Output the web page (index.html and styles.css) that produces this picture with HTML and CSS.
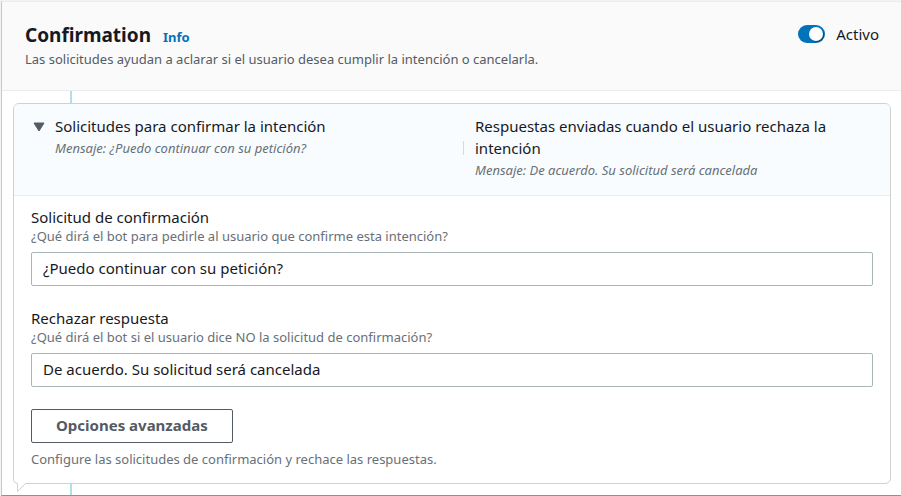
FILE: index.html
```html
<!DOCTYPE html>
<html lang="es">
<head>
<meta charset="utf-8">
<title>Confirmation</title>
<link rel="stylesheet" href="styles.css">
</head>
<body>
<main class="panel">
  <header class="panel-header">
    <div>
      <div class="title-row">
        <h1>Confirmation</h1>
        <a class="info" href="#info">Info</a>
      </div>
      <p class="description">Las solicitudes ayudan a aclarar si el usuario desea cumplir la intención o cancelarla.</p>
    </div>
    <label class="toggle">
      <input type="checkbox" role="switch" checked>
      <span>Activo</span>
    </label>
  </header>
  <div class="flow">
    <div class="connector"></div>
    <section class="card">
      <button class="summary" type="button" aria-expanded="true" aria-controls="prompts">
        <svg class="caret" viewBox="0 0 12 10" aria-hidden="true"><path d="M1 1h10L6 9z"/></svg>
        <span class="summary-item">
          <span class="summary-title">Solicitudes para confirmar la intención</span>
          <span class="summary-message">Mensaje: ¿Puedo continuar con su petición?</span>
        </span>
        <span class="divider"></span>
        <span class="summary-item">
          <span class="summary-title">Respuestas enviadas cuando el usuario rechaza la intención</span>
          <span class="summary-message">Mensaje: De acuerdo. Su solicitud será cancelada</span>
        </span>
      </button>
      <form class="fields" id="prompts">
        <div class="field">
          <label for="confirm">Solicitud de confirmación</label>
          <p class="hint" id="confirm-hint">¿Qué dirá el bot para pedirle al usuario que confirme esta intención?</p>
          <input class="textbox" type="text" id="confirm" aria-describedby="confirm-hint" value="¿Puedo continuar con su petición?">
        </div>
        <div class="field">
          <label for="decline">Rechazar respuesta</label>
          <p class="hint" id="decline-hint">¿Qué dirá el bot si el usuario dice NO la solicitud de confirmación?</p>
          <input class="textbox" type="text" id="decline" aria-describedby="decline-hint" value="De acuerdo. Su solicitud será cancelada">
        </div>
        <div>
          <button class="advanced" type="button">Opciones avanzadas</button>
          <p class="hint">Configure las solicitudes de confirmación y rechace las respuestas.</p>
        </div>
      </form>
      <svg class="tail" viewBox="0 0 13 14" aria-hidden="true"><path class="tail-fill" d="M0 0v2l4 3v8l8-8V0z"/><path class="tail-line" d="M.5 0v1.500q0 2 4 3v8l8-8"/></svg>
    </section>
    <div class="connector connector-end"></div>
  </div>
</main>
</body>
</html>
```
FILE: styles.css
```css
* {
  box-sizing: border-box;
}

body {
  margin: 0;
  padding: 1px 0 0 1px;
  background: #f2f3f3;
  color: #16191f;
  font-family: "Noto Sans", "Open Sans", sans-serif;
  font-size: 15px;
  line-height: 22px;
}

h1,
p {
  margin: 0;
}

.panel {
  border-top: 1px solid #eaeded;
  border-left: 1px solid #c4c9ca;
  border-bottom: 1px solid #879596;
  background: #fff;
}

.panel-header {
  display: flex;
  justify-content: space-between;
  align-items: flex-start;
  padding: 21px 22px 20px 23px;
  border-bottom: 1px solid #eaeded;
  background: #fafafa;
}

.title-row {
  display: flex;
  align-items: baseline;
  gap: 12px;
}

h1 {
  font-size: 19px;
  line-height: 25px;
}

.info {
  color: #0073bb;
  font-size: 13px;
  font-weight: 700;
  text-decoration: none;
}

.description {
  color: #545b64;
  font-size: 13px;
}

.toggle {
  display: flex;
  align-items: center;
  gap: 11px;
}

.toggle input {
  appearance: none;
  display: flex;
  justify-content: flex-end;
  align-items: center;
  width: 27px;
  height: 18px;
  margin: 0;
  padding: 2px;
  border-radius: 9px;
  background: #0073bb;
}

.toggle input::before {
  content: "";
  width: 14px;
  height: 14px;
  border-radius: 50%;
  background: #fff;
  box-shadow: 1px 1px 1px rgba(0, 28, 36, 0.5);
}

.toggle input:not(:checked) {
  justify-content: flex-start;
  background: #879596;
}

.flow {
  padding: 0 10px 0 11px;
}

.connector {
  width: 2px;
  height: 12px;
  margin-left: 57px;
  background: #b0dfe5;
}

.connector-end {
  height: 11px;
}

.card {
  position: relative;
  border: 1px solid #d0d1d1;
  border-radius: 6px;
  background: #fff;
}

.summary {
  display: grid;
  grid-template-columns: 11px 1fr 1px 1fr;
  width: 100%;
  padding: 11px 7px 14px 19px;
  border: 0;
  border-bottom: 1px solid #eaeded;
  border-radius: 5px 5px 0 0;
  background: #f8fcff;
  color: inherit;
  font: inherit;
  text-align: left;
}

.caret {
  width: 12px;
  height: 10px;
  margin-top: 7px;
  fill: #545b64;
  stroke: #545b64;
  stroke-linejoin: round;
}

.summary-item {
  display: flex;
  flex-direction: column;
  padding-left: 11px;
}

.summary-message {
  color: #687078;
  font-size: 13px;
  font-style: italic;
}

.divider {
  align-self: center;
  height: 14px;
  background: #d5dbdb;
}

.fields {
  display: flex;
  flex-direction: column;
  gap: 21px;
  padding: 10px 17px 16px;
}

.field label {
  display: block;
}

.hint {
  color: #687078;
  font-size: 13px;
  line-height: 16px;
}

.textbox {
  display: block;
  width: 100%;
  height: 34px;
  margin-top: 8px;
  padding: 0 11px 2px;
  border: 1px solid #aab7b8;
  border-radius: 2px;
  background: #fff;
  color: inherit;
  font: inherit;
}

.advanced {
  height: 34px;
  margin: 1px 0 8px;
  padding: 0 24px 2px;
  border: 1px solid #545b64;
  border-radius: 2px;
  background: #fff;
  color: #545b64;
  font: inherit;
  font-weight: 700;
}

.tail {
  position: absolute;
  left: -1px;
  bottom: -10px;
  width: 13px;
  height: 14px;
}

.tail-fill {
  fill: #fff;
}

.tail-line {
  fill: none;
  stroke: #d0d1d1;
}
```
